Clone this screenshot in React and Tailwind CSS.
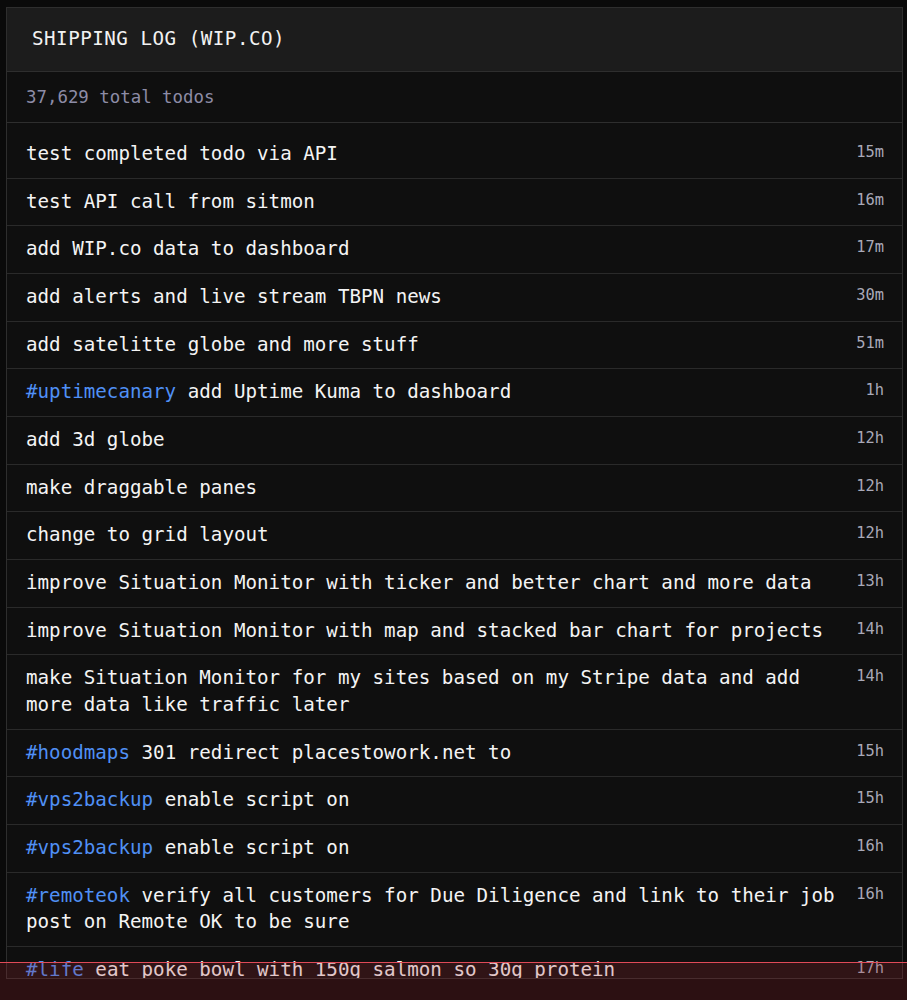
const todos = [
  { text: "test completed todo via API", ago: "15m" },
  { text: "test API call from sitmon", ago: "16m" },
  { text: "add WIP.co data to dashboard", ago: "17m" },
  { text: "add alerts and live stream TBPN news", ago: "30m" },
  { text: "add satelitte globe and more stuff", ago: "51m" },
  { tag: "#uptimecanary", text: "add Uptime Kuma to dashboard", ago: "1h" },
  { text: "add 3d globe", ago: "12h" },
  { text: "make draggable panes", ago: "12h" },
  { text: "change to grid layout", ago: "12h" },
  {
    text: "improve Situation Monitor with ticker and better chart and more data",
    ago: "13h",
  },
  {
    text: "improve Situation Monitor with map and stacked bar chart for projects",
    ago: "14h",
  },
  {
    text: "make Situation Monitor for my sites based on my Stripe data and add more data like traffic later",
    ago: "14h",
  },
  { tag: "#hoodmaps", text: "301 redirect placestowork.net to", ago: "15h" },
  { tag: "#vps2backup", text: "enable script on", ago: "15h" },
  { tag: "#vps2backup", text: "enable script on", ago: "16h" },
  {
    tag: "#remoteok",
    text: "verify all customers for Due Diligence and link to their job post on Remote OK to be sure",
    ago: "16h",
  },
  { tag: "#life", text: "eat poke bowl with 150g salmon so 30g protein", ago: "17h" },
];

export default function App() {
  return (
    <div className="relative min-h-screen overflow-hidden bg-[#0a0a0a] pt-[7px] pl-[6px] pr-[4px] font-['DejaVu_Sans_Mono',monospace]">
      <section className="flex h-[972px] flex-col overflow-hidden border border-[#2e2e2e] bg-[#0f0f0f]">
        <div className="flex h-[64px] shrink-0 items-center border-b border-[#2e2e2e] bg-[#1c1c1c] pl-[25px]">
          <h2 className="text-[19.2px] tracking-[0.5px] text-[#f2f2f2]">
            SHIPPING LOG (WIP.CO)
          </h2>
        </div>

        <div className="flex h-[51px] shrink-0 items-center border-b border-[#2e2e2e] pl-[19px]">
          <p className="text-[17.4px] text-[#8d8ca6]">37,629 total todos</p>
        </div>

        <ul>
          {todos.map((todo, i) => (
            <li
              key={i}
              className={
                i === 0
                  ? "flex items-start justify-between gap-5 border-b border-[#2a2a2a] pt-[18px] pb-[10px] pl-[19px] pr-[18px]"
                  : "flex items-start justify-between gap-5 border-b border-[#2a2a2a] py-[10.1px] pl-[19px] pr-[18px]"
              }
            >
              <span className="text-[19.2px] leading-[26.5px] text-[#f4f4f4]">
                {todo.tag && <span className="text-[#5090f5]">{todo.tag} </span>}
                {todo.text}
              </span>
              <span className="shrink-0 text-[15.4px] leading-[22px] text-[#a9a9b8]">
                {todo.ago}
              </span>
            </li>
          ))}
        </ul>
      </section>

      <div className="absolute inset-x-0 top-[962px] h-[40px] border-t border-[#e04a58] bg-[rgba(170,40,50,0.22)]"></div>
    </div>
  );
}
